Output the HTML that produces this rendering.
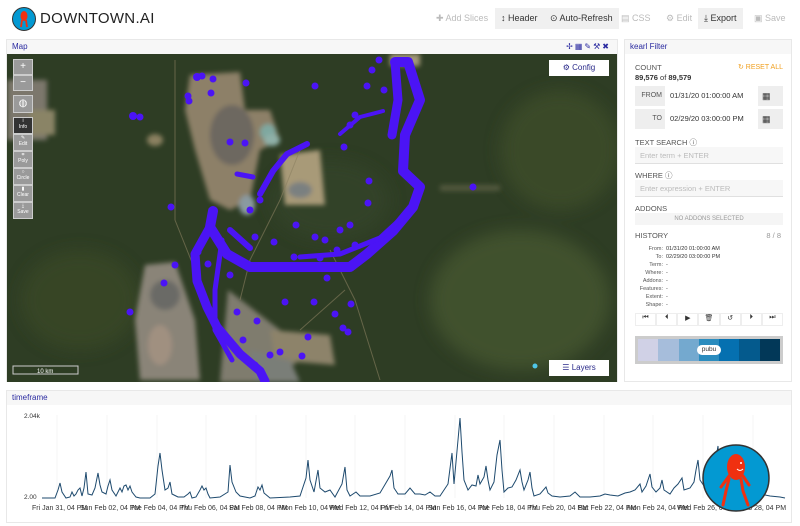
<!DOCTYPE html>
<html><head><meta charset="utf-8"><style>
*{box-sizing:border-box;margin:0;padding:0}
body{width:800px;height:526px;background:#fff;font-family:"Liberation Sans",sans-serif;position:relative;overflow:hidden;color:#333}
.abs{position:absolute}
.btn{position:absolute;top:8px;height:21px;font-size:9px;line-height:21px;padding:0 6px;color:#333}
.btn.dis{color:#bbb}
.btn.on{background:#f0f0f0}
.panel{position:absolute;border:1px solid #e8e8e8;background:#fff}
.ptitle{height:14px;background:#f7f7f7;color:#2a2aa0;font-size:8px;line-height:14px;padding-left:5px}
.lbl{font-size:7.5px;color:#555;position:absolute;left:10px}
.inp{position:absolute;left:10px;width:148px;height:17px;background:#f7f7f7;border-bottom:1px solid #e0e0e0;font-size:7.5px;color:#bbb;line-height:17px;padding-left:5px}
.mb{position:absolute;left:6px;width:20px;background:#9a9a9a;border:1px solid #ccc;color:#fff;font-size:5px;text-align:center}
.hk{position:absolute;font-size:5.5px;color:#555;text-align:right;width:30px;left:8px}
.hv{position:absolute;font-size:5.5px;color:#333;left:41px}
.tl{position:absolute;top:505px;font-size:7px;color:#333;white-space:nowrap}
</style></head><body>
<!-- header -->
<svg class="abs" style="left:12px;top:7px" width="24" height="24"><circle cx="12" cy="12" r="11.5" fill="#0399d2" stroke="#333" stroke-width="1"/><ellipse cx="12" cy="9" rx="3.5" ry="5" fill="#f03010"/><path d="M10 13 L9 20 M14 13 L15 20" stroke="#f03010" stroke-width="1.8"/></svg>
<div class="abs" style="left:40px;top:10px;font-size:15px;color:#222;letter-spacing:0.3px">DOWNTOWN.AI</div>
<div class="btn dis" style="left:430px">✚ Add Slices</div>
<div class="btn on" style="left:495px">↕ Header</div>
<div class="btn on" style="left:544px">⊙ Auto-Refresh</div>
<div class="btn dis" style="left:615px">▤ CSS</div>
<div class="btn dis" style="left:660px">⚙ Edit</div>
<div class="btn on" style="left:698px">⤓ Export</div>
<div class="btn dis" style="left:748px">▣ Save</div>

<!-- map panel -->
<div class="panel" style="left:6px;top:39px;width:612px;height:343px">
<div class="ptitle">Map<span style="float:right;margin-right:6px;letter-spacing:2px">✢▦✎⚒✖</span></div>
<svg style="position:absolute;left:0;top:14px" width="610" height="328">
<defs><filter id="b"><feGaussianBlur stdDeviation="2.5"/></filter><filter id="b2"><feGaussianBlur stdDeviation="8"/></filter></defs>
<rect width="610" height="328" fill="#2e3d24"/>
<g transform="translate(-7,-54)">
<g filter="url(#b2)" opacity="0.7">
<ellipse cx="520" cy="300" rx="90" ry="70" fill="#4a5a32"/>
<ellipse cx="560" cy="150" rx="60" ry="60" fill="#3f4f2c"/>
<ellipse cx="80" cy="300" rx="60" ry="50" fill="#3a4a28"/>
<ellipse cx="330" cy="200" rx="60" ry="40" fill="#34442a"/>
</g>
<g filter="url(#b)">
<rect x="7" y="80" width="40" height="60" fill="#7b776c"/>
<rect x="30" y="110" width="25" height="25" fill="#8a8466"/>
<polygon points="190,75 240,72 245,110 270,110 280,140 260,150 250,200 230,210 210,200 195,150 185,110" fill="#8d8068"/>
<ellipse cx="232" cy="135" rx="22" ry="30" fill="#6d6860"/>
<polygon points="280,155 320,150 325,205 285,205" fill="#a89a78"/>
<ellipse cx="300" cy="190" rx="12" ry="8" fill="#7a8080"/>
<polygon points="145,265 175,262 195,320 200,380 140,380 135,320" fill="#8a8478"/>
<ellipse cx="160" cy="345" rx="12" ry="20" fill="#a09080"/>
<ellipse cx="165" cy="295" rx="15" ry="15" fill="#6a6a66"/>
<polygon points="228,290 280,330 300,360 270,382 220,382" fill="#7f7b6e"/>
<polygon points="270,330 330,335 335,365 275,360" fill="#8d836a"/>
<polygon points="250,350 290,360 300,382 255,382" fill="#7a7e78"/>
<rect x="390" y="54" width="30" height="12" fill="#a39878"/>
<ellipse cx="268" cy="132" rx="8" ry="8" fill="#7fa8a0"/>
<ellipse cx="272" cy="140" rx="8" ry="6" fill="#8fb0a8"/>
<ellipse cx="247" cy="205" rx="8" ry="10" fill="#8a9aa0"/>
<ellipse cx="155" cy="140" rx="8" ry="6" fill="#8a8060"/>
<rect x="440" y="185" width="60" height="6" fill="#6a6a50" opacity="0.6"/>
</g>
<path d="M175 60 L175 220 L195 270 M240 300 L250 260 L280 200 L300 150 M330 250 L355 300 L380 380 M345 290 L300 330" stroke="#8a8060" stroke-width="1" fill="none" opacity="0.6"/>
<g fill="none" stroke="#4b14f5" stroke-linecap="round" stroke-linejoin="round">
<path d="M395 62 L408 62 L420 100 L405 135 L403 171 L420 187 L413 207 L393 231 L367 254 L350 267 L300 267 L250 267 L227 254 L210 227 L213 211" stroke-width="10"/>
<path d="M395 62 L398 100 L392 135" stroke-width="9"/>
<path d="M210 227 L195 254 L197 281 L207 307 L217 327 L240 354 L260 371 L265 381" stroke-width="9"/>
<path d="M222 240 L215 290 L215 330 L232 360" stroke-width="5"/>
<path d="M260 194 L273 171 L287 154 L307 144" stroke-width="6"/>
<path d="M237 174 L253 177" stroke-width="5"/>
<path d="M340 134 L360 117 L383 111" stroke-width="4"/>
<path d="M300 257 L340 254 L380 238 L405 215" stroke-width="5"/>
<path d="M230 230 L250 248" stroke-width="6"/>
</g>
<g fill="#4b14f5">
<circle cx="133" cy="116" r="4"/><circle cx="140" cy="117" r="3.5"/><circle cx="197" cy="77" r="4"/><circle cx="202" cy="76" r="3.5"/><circle cx="188" cy="96" r="3.5"/><circle cx="189" cy="101" r="3.5"/><circle cx="213" cy="79" r="3.5"/><circle cx="211" cy="93" r="3.5"/><circle cx="246" cy="83" r="3.5"/><circle cx="315" cy="86" r="3.5"/><circle cx="367" cy="86" r="3.5"/><circle cx="372" cy="70" r="3.5"/><circle cx="230" cy="142" r="3.5"/><circle cx="245" cy="143" r="3.5"/><circle cx="171" cy="207" r="3.5"/><circle cx="130" cy="312" r="3.5"/><circle cx="164" cy="283" r="3.5"/><circle cx="175" cy="265" r="3.5"/><circle cx="473" cy="187" r="3.5"/><circle cx="368" cy="203" r="3.5"/><circle cx="296" cy="225" r="3.5"/><circle cx="255" cy="237" r="3.5"/><circle cx="274" cy="242" r="3.5"/><circle cx="285" cy="302" r="3.5"/><circle cx="314" cy="302" r="3.5"/><circle cx="351" cy="304" r="3.5"/><circle cx="335" cy="314" r="3.5"/><circle cx="348" cy="332" r="3.5"/><circle cx="343" cy="328" r="3.5"/><circle cx="308" cy="337" r="3.5"/><circle cx="302" cy="356" r="3.5"/><circle cx="237" cy="312" r="3.5"/><circle cx="257" cy="321" r="3.5"/><circle cx="327" cy="278" r="3.5"/><circle cx="315" cy="237" r="3.5"/><circle cx="325" cy="240" r="3.5"/><circle cx="340" cy="230" r="3.5"/><circle cx="350" cy="225" r="3.5"/><circle cx="355" cy="245" r="3.5"/><circle cx="337" cy="250" r="3.5"/><circle cx="320" cy="258" r="3.5"/><circle cx="294" cy="257" r="3.5"/><circle cx="355" cy="115" r="3.5"/><circle cx="350" cy="125" r="3.5"/><circle cx="344" cy="147" r="3.5"/><circle cx="369" cy="181" r="3.5"/><circle cx="384" cy="90" r="3.5"/><circle cx="379" cy="60" r="3.5"/><circle cx="208" cy="264" r="3.5"/><circle cx="230" cy="275" r="3.5"/><circle cx="240" cy="260" r="3.5"/><circle cx="198" cy="252" r="3.5"/><circle cx="270" cy="355" r="3.5"/><circle cx="280" cy="352" r="3.5"/><circle cx="255" cy="365" r="3.5"/><circle cx="243" cy="340" r="3.5"/><circle cx="260" cy="200" r="3.5"/><circle cx="250" cy="210" r="3.5"/>
</g>
</g>
<rect x="6" y="312" width="65" height="8" fill="none" stroke="#ccc" stroke-width="1"/>
<text x="30" y="319" font-size="6" fill="#fff" font-family="Liberation Sans">10 km</text>
<circle cx="528" cy="312" r="2.5" fill="#4fc6e8"/>
</svg>
<div class="mb" style="top:19px;height:16px;font-size:10px;line-height:14px">+</div>
<div class="mb" style="top:35px;height:16px;font-size:10px;line-height:14px">−</div>
<div class="mb" style="top:55px;height:18px;font-size:10px;line-height:16px">◍</div>
<div class="mb" style="top:77px;height:17px;background:#333">i<br>Info</div>
<div class="mb" style="top:94px;height:17px">✎<br>Edit</div>
<div class="mb" style="top:111px;height:17px">⌗<br>Poly</div>
<div class="mb" style="top:128px;height:17px">○<br>Circle</div>
<div class="mb" style="top:145px;height:17px">▮<br>Clear</div>
<div class="mb" style="top:162px;height:17px">⤓<br>Save</div>
<div class="abs" style="left:542px;top:20px;width:60px;height:16px;background:#fff;font-size:8px;line-height:16px;text-align:center;color:#2a2a8a">⚙ Config</div>
<div class="abs" style="left:542px;top:320px;width:60px;height:16px;background:#fff;font-size:8px;line-height:16px;text-align:center;color:#2a2a8a">☰ Layers</div>
</div>

<!-- filter panel -->
<div class="panel" style="left:624px;top:39px;width:168px;height:343px">
<div class="ptitle">kearl Filter</div>
<div class="lbl" style="top:23px">COUNT</div>
<div class="abs" style="right:8px;top:23px;font-size:7px;color:#f0a020">↻ RESET ALL</div>
<div class="abs" style="left:10px;top:33px;font-size:7.5px;color:#333"><b>89,576</b> of <b>89,579</b></div>
<div class="abs" style="left:10px;top:46px;width:148px;height:20px;background:#eee"></div>
<div class="abs" style="left:10px;top:46px;width:27px;height:20px;font-size:7px;line-height:20px;text-align:right;color:#555">FROM</div>
<div class="abs" style="left:40px;top:46px;width:93px;height:20px;background:#fff;font-size:7.5px;line-height:20px;padding-left:5px">01/31/20 01:00:00 AM</div>
<div class="abs" style="left:137px;top:46px;font-size:9px;line-height:20px">▦</div>
<div class="abs" style="left:10px;top:69px;width:148px;height:20px;background:#eee"></div>
<div class="abs" style="left:10px;top:69px;width:27px;height:20px;font-size:7px;line-height:20px;text-align:right;color:#555">TO</div>
<div class="abs" style="left:40px;top:69px;width:93px;height:20px;background:#fff;font-size:7.5px;line-height:20px;padding-left:5px">02/29/20 03:00:00 PM</div>
<div class="abs" style="left:137px;top:69px;font-size:9px;line-height:20px">▦</div>
<div class="lbl" style="top:97px">TEXT SEARCH ⓘ</div>
<div class="inp" style="top:107px">Enter term + ENTER</div>
<div class="lbl" style="top:130px">WHERE ⓘ</div>
<div class="inp" style="top:140px">Enter expression + ENTER</div>
<div class="lbl" style="top:164px">ADDONS</div>
<div class="abs" style="left:10px;top:173px;width:148px;height:12px;background:#f5f5f5;font-size:6px;color:#999;text-align:center;line-height:12px">NO ADDONS SELECTED</div>
<div class="lbl" style="top:191px">HISTORY</div>
<div class="abs" style="right:10px;top:191px;font-size:7.5px;color:#999">8 / 8</div>
<div class="hk" style="top:206px">From:</div><div class="hv" style="top:206px">01/31/20 01:00:00 AM</div>
<div class="hk" style="top:214px">To:</div><div class="hv" style="top:214px">02/29/20 03:00:00 PM</div>
<div class="hk" style="top:222px">Term:</div><div class="hv" style="top:222px">-</div>
<div class="hk" style="top:230px">Where:</div><div class="hv" style="top:230px">-</div>
<div class="hk" style="top:238px">Addons:</div><div class="hv" style="top:238px">-</div>
<div class="hk" style="top:246px">Features:</div><div class="hv" style="top:246px">-</div>
<div class="hk" style="top:254px">Extent:</div><div class="hv" style="top:254px">-</div>
<div class="hk" style="top:262px">Shape:</div><div class="hv" style="top:262px">-</div>
<div class="abs" style="left:10px;top:273px;width:148px;height:13px;display:flex;font-size:7px">
<span style="flex:1;border:1px solid #eee;text-align:center">⏮</span><span style="flex:1;border:1px solid #eee;text-align:center">⏴</span><span style="flex:1;border:1px solid #eee;text-align:center">▶</span><span style="flex:1;border:1px solid #eee;text-align:center">🗑</span><span style="flex:1;border:1px solid #eee;text-align:center">↺</span><span style="flex:1;border:1px solid #eee;text-align:center">⏵</span><span style="flex:1;border:1px solid #eee;text-align:center">⏭</span></div>
<div class="abs" style="left:10px;top:296px;width:148px;height:28px;background:#ccc;padding:3px;display:flex">
<span style="flex:1;background:#d0d1e6"></span><span style="flex:1;background:#a6bddb"></span><span style="flex:1;background:#74a9cf"></span><span style="flex:1;background:#2b8cbe"></span><span style="flex:1;background:#0570b0"></span><span style="flex:1;background:#045a8d"></span><span style="flex:1;background:#023858"></span></div>
<div class="abs" style="left:72px;top:305px;width:24px;height:10px;background:#fff;border-radius:5px;font-size:6.5px;text-align:center;line-height:10px">pubu</div>
</div>

<!-- timeframe -->
<div class="panel" style="left:6px;top:390px;width:786px;height:133px">
<div class="ptitle">timeframe</div>
</div>
<div class="abs" style="left:24px;top:413px;font-size:6.5px">2.04k</div>
<div class="abs" style="left:24px;top:494px;font-size:6.5px">2.00</div>
<svg class="abs" style="left:0;top:0" width="800" height="526">
<g stroke="#eee" stroke-width="0.6"><path d="M57 415V498M107 415V498M157 415V498M206 415V498M256 415V498M306 415V498M355 415V498M405 415V498M455 415V498M504 415V498M554 415V498M604 415V498M653 415V498M703 415V498M753 415V498"/></g>
<polyline fill="none" stroke="#1e4a6e" stroke-width="1" points="42,498 55,498 58,490 60,483 62,492 66,498 70,497 72,492 74,496 76,494 78,490 80,488 82,496 84,488 86,472 88,494 92,495 95,488 98,473 100,485 102,492 106,494 108,486 110,480 112,490 116,496 120,488 122,492 124,486 126,485 128,490 130,486 132,492 136,497 140,498 150,498 155,494 158,466 160,453 162,470 165,490 168,488 170,482 172,494 176,496 178,497 184,497 188,494 190,492 192,498 196,497 200,490 202,486 204,490 206,488 208,494 210,498 220,497 228,492 230,465 232,482 236,492 240,496 250,498 255,496 258,487 260,490 262,485 264,493 270,498 290,497 300,496 306,478 308,460 310,480 314,492 318,470 320,488 325,492 330,490 335,497 342,484 345,467 347,490 350,496 356,492 360,496 370,496 380,493 390,476 392,470 394,488 398,494 405,494 410,488 415,494 420,494 425,495 430,492 435,496 440,496 448,484 452,453 454,484 458,440 460,418 462,452 464,480 468,490 472,485 476,486 478,475 480,484 484,477 486,466 488,480 490,490 494,482 497,455 500,440 502,470 504,492 508,488 512,487 516,480 520,470 522,482 524,490 528,480 530,472 532,488 534,496 540,494 546,487 548,493 552,496 560,497 570,496 575,492 580,497 590,497 600,496 605,494 610,495 618,496 625,493 630,492 635,490 640,484 642,492 646,486 650,474 652,487 656,492 660,488 662,480 664,490 670,494 674,488 678,484 682,478 684,490 690,488 694,482 696,470 698,460 700,480 704,486 706,476 708,468 710,488 714,490 716,458 718,446 720,480 724,490 730,488 740,487 745,490 750,492 760,494 770,496 780,497 785,498"/>
</svg>
<div class="tl" style="left:32px">Fri Jan 31, 04 PM</div>
<div class="tl" style="left:80px">Sun Feb 02, 04 PM</div>
<div class="tl" style="left:130px">Tue Feb 04, 04 PM</div>
<div class="tl" style="left:180px">Thu Feb 06, 04 PM</div>
<div class="tl" style="left:229px">Sat Feb 08, 04 PM</div>
<div class="tl" style="left:279px">Mon Feb 10, 04 PM</div>
<div class="tl" style="left:329px">Wed Feb 12, 04 PM</div>
<div class="tl" style="left:380px">Fri Feb 14, 04 PM</div>
<div class="tl" style="left:428px">Sun Feb 16, 04 PM</div>
<div class="tl" style="left:478px">Tue Feb 18, 04 PM</div>
<div class="tl" style="left:528px">Thu Feb 20, 04 PM</div>
<div class="tl" style="left:578px">Sat Feb 22, 04 PM</div>
<div class="tl" style="left:627px">Mon Feb 24, 04 PM</div>
<div class="tl" style="left:677px">Wed Feb 26, 04 PM</div>
<div class="tl" style="left:730px">Fri Feb 28, 04 PM</div>
<svg class="abs" style="left:701px;top:443px" width="70" height="70">
<circle cx="35" cy="35" r="33" fill="#0399d2" stroke="#333" stroke-width="1.5"/>
<ellipse cx="35" cy="24" rx="9" ry="13" fill="#f03010"/>
<path d="M28 36 L25 48 L22 62 M40 36 L42 48 L47 62 M28 33 L20 44 M42 33 L48 42" stroke="#f03010" stroke-width="3" fill="none" stroke-linecap="round"/>
<path d="M36 26 Q39 29 42 26" stroke="#fff" stroke-width="1" fill="none"/>
<circle cx="40" cy="20" r="1" fill="#fff"/>
</svg>
</body></html>
